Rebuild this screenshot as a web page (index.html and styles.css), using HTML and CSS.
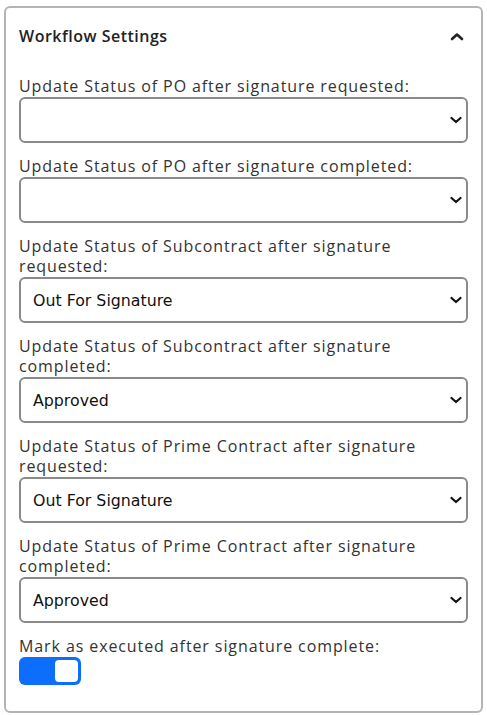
FILE: index.html
```html
<!DOCTYPE html>
<html lang="en">
<head>
    <meta charset="UTF-8">
    <meta name="viewport" content="width=device-width, initial-scale=1.0">
    <title>Workflow Settings</title>
    <link rel="stylesheet" href="styles.css">
</head>
<body>
    <section class="card">
        <div class="card-header">
            <span class="title">Workflow Settings</span>
            <svg class="chevron" width="14" height="9" viewBox="0 0 14 9">
                <path d="M2 7 L7 2.5 L12 7" fill="none" stroke="#222" stroke-width="2.6" stroke-linecap="round" stroke-linejoin="round"/>
            </svg>
        </div>
        <div class="card-body">
            <div class="field">
                <label for="po-requested">Update Status of PO after signature requested:</label>
                <select id="po-requested">
                    <option></option>
                </select>
            </div>
            <div class="field">
                <label for="po-completed">Update Status of PO after signature completed:</label>
                <select id="po-completed">
                    <option></option>
                </select>
            </div>
            <div class="field">
                <label for="sub-requested">Update Status of Subcontract after signature requested:</label>
                <select id="sub-requested">
                    <option>Out For Signature</option>
                </select>
            </div>
            <div class="field">
                <label for="sub-completed">Update Status of Subcontract after signature completed:</label>
                <select id="sub-completed">
                    <option>Approved</option>
                </select>
            </div>
            <div class="field">
                <label for="prime-requested">Update Status of Prime Contract after signature requested:</label>
                <select id="prime-requested">
                    <option>Out For Signature</option>
                </select>
            </div>
            <div class="field">
                <label for="prime-completed">Update Status of Prime Contract after signature completed:</label>
                <select id="prime-completed">
                    <option>Approved</option>
                </select>
            </div>
            <div class="field">
                <label>Mark as executed after signature complete:</label>
                <span class="toggle on"><span class="knob"></span></span>
            </div>
        </div>
    </section>
</body>
</html>
```

FILE: styles.css
```css
* {
    box-sizing: border-box;
}
html, body {
    margin: 0;
    padding: 0;
    background: #fff;
}
body {
    padding: 6px 4px 3px;
    font-family: "Open Sans", "Noto Sans", sans-serif;
    color: #2b2b2b;
}

.card {
    border: 2px solid #b4b4b4;
    border-radius: 6px;
    padding: 0 13px 26px;
}
.card-header {
    height: 56px;
    display: flex;
    align-items: center;
    justify-content: space-between;
}
.card-header .title {
    font-size: 16px;
    font-weight: 600;
    letter-spacing: 0.5px;
    color: #222;
}
.card-header .chevron {
    margin-right: 4px;
}
.card-body {
    padding-top: 12px;
}

.field {
    display: flex;
    flex-direction: column;
    margin-bottom: 13px;
}
.field:last-child {
    margin-bottom: 0;
}
.field label {
    font-size: 16px;
    line-height: 20px;
    letter-spacing: 0.9px;
    color: #333;
    margin-bottom: 1px;
}
.field select {
    appearance: none;
    -webkit-appearance: none;
    height: 46px;
    width: 100%;
    margin: 0;
    padding: 0 30px 0 12px;
    border: 2px solid #8a8a8a;
    border-radius: 6px;
    background-color: #fff;
    background-image: url("data:image/svg+xml,%3Csvg xmlns='http://www.w3.org/2000/svg' width='12' height='8' viewBox='0 0 12 8'%3E%3Cpath d='M1.5 2 L6 6 L10.5 2' fill='none' stroke='%23111' stroke-width='2.2' stroke-linecap='round' stroke-linejoin='round'/%3E%3C/svg%3E");
    background-repeat: no-repeat;
    background-position: right 4px center;
    background-position-x: calc(100% - 4px);
    font-family: "DejaVu Sans", sans-serif;
    font-size: 15.8px;
    color: #111;
}

.toggle {
    display: flex;
    justify-content: flex-start;
    width: 62px;
    height: 28px;
    padding: 3px;
    border-radius: 6px;
    background: #0d6efd;
}
.toggle.on {
    justify-content: flex-end;
}
.toggle .knob {
    width: 23px;
    height: 22px;
    border-radius: 4px;
    background: #fff;
}
```
